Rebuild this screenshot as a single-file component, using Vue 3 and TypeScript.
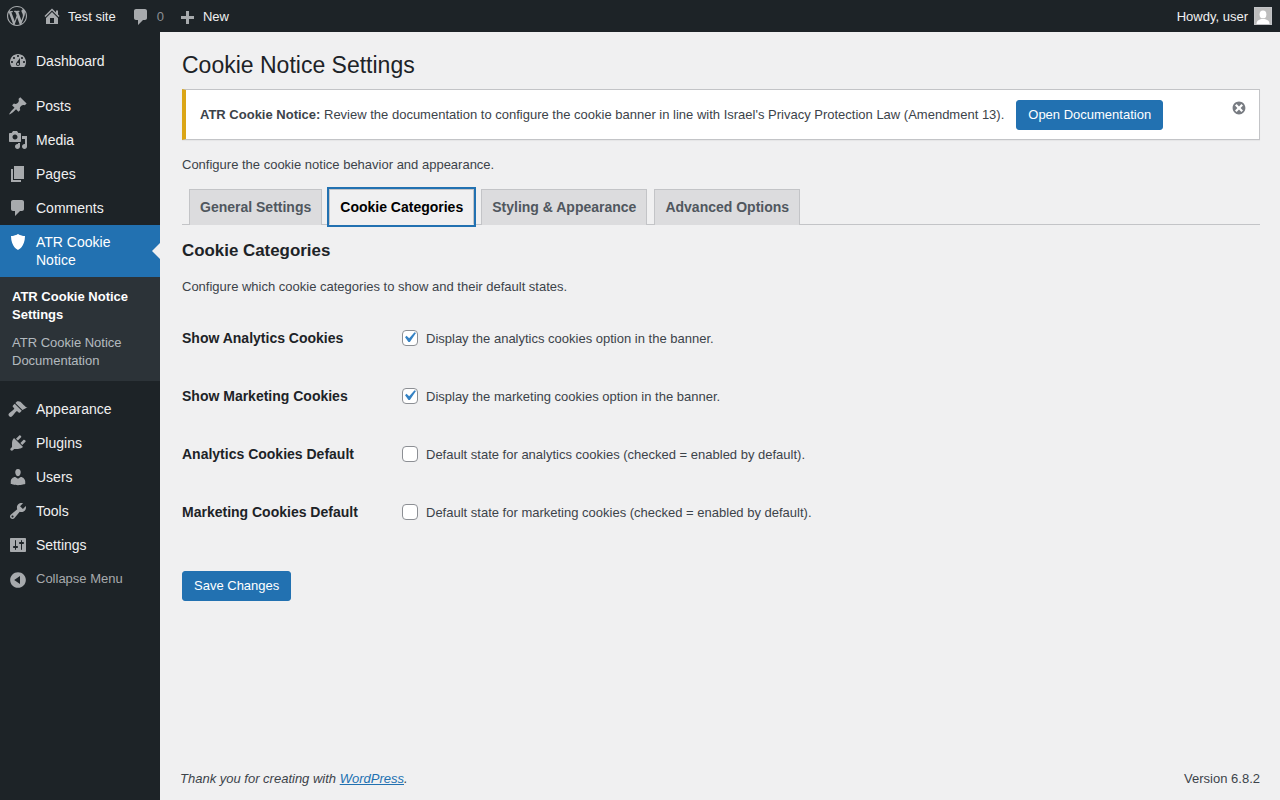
<script setup lang="ts">
import { ref } from 'vue'

interface MenuItem { label: string; d: string }

const icons = {
  dashboard: 'M3.76 16h12.48c1.1-1.37 1.76-3.11 1.76-5 0-4.42-3.58-8-8-8s-8 3.58-8 8c0 1.89.66 3.63 1.76 5zM10 4c.55 0 1 .45 1 1s-.45 1-1 1-1-.45-1-1 .45-1 1-1zM6 6c.55 0 1 .45 1 1s-.45 1-1 1-1-.45-1-1 .45-1 1-1zm8 0c.55 0 1 .45 1 1s-.45 1-1 1-1-.45-1-1 .45-1 1-1zm-5.37 5.55L12 7v6c0 1.1-.9 2-2 2s-2-.9-2-2c0-.57.24-1.08.63-1.45zM4 10c.55 0 1 .45 1 1s-.45 1-1 1-1-.45-1-1 .45-1 1-1zm12 0c.55 0 1 .45 1 1s-.45 1-1 1-1-.45-1-1 .45-1 1-1zm-5 3c0-.55-.45-1-1-1s-1 .45-1 1 .45 1 1 1 1-.45 1-1z',
  post: 'M10.44 3.02l1.82-1.82 6.36 6.35-1.83 1.82c-1.05-.68-2.48-.57-3.41.36l-.75.75c-.92.93-1.04 2.35-.35 3.41l-1.83 1.82-2.41-2.41-2.8 2.79c-.42.42-3.38 2.71-3.8 2.29s1.86-3.39 2.28-3.81l2.79-2.79L4.1 9.36l1.83-1.82c1.05.69 2.48.57 3.4-.36l.75-.75c.93-.92 1.05-2.35.36-3.41z',
  media: 'M13 11V4c0-.55-.45-1-1-1h-1.67L9 1H5L3.67 3H2c-.55 0-1 .45-1 1v7c0 .55.45 1 1 1h10c.55 0 1-.45 1-1zM7 4.5c1.38 0 2.5 1.12 2.5 2.5S8.38 9.5 7 9.5 4.5 8.38 4.5 7 5.62 4.5 7 4.5zM14 6h5v10.5c0 1.38-1.12 2.5-2.5 2.5S14 17.88 14 16.5s1.12-2.5 2.5-2.5c.17 0 .34.02.5.05V9h-3V6zm-4 8.05V13h2v3.5c0 1.38-1.12 2.5-2.5 2.5S7 17.88 7 16.5 8.12 14 9.5 14c.17 0 .34.02.5.05z',
  page: 'M6 15V2h10v13H6zm-1 1h8v2H3V5h2v11z',
  comment: 'M5 2h9c1.1 0 2 .9 2 2v7c0 1.1-.9 2-2 2h-2l-5 5v-5H5c-1.1 0-2-.9-2-2V4c0-1.1.9-2 2-2z',
  shield: 'M10 2s3 2 7 2c0 11-7 14-7 14S3 15 3 4c4 0 7-2 7-2z',
  appearance: 'M14.48 11.06L7.41 3.99l1.5-1.5c.5-.56 2.3-.47 3.51.32.47.31 3.37 3.38 4.83 4.6 1.15.96 1.68 1.14 2.75.69zm-.71.71L6.7 4.7 4.93 6.47c-.39.39-.39 1.02 0 1.41l1.06 1.06c.39.39.39 1.03 0 1.42-.6.6-5.5 4.24-5.5 5.23 0 1.2 1.21 2.41 2.41 2.41.99 0 4.63-4.9 5.23-5.5.39-.39 1.03-.39 1.42 0l1.06 1.06c.39.39 1.02.39 1.41 0z',
  plugins: 'M13.11 4.36L9.87 7.6 8 5.73l3.24-3.24c.35-.34 1.05-.2 1.56.32.52.51.66 1.21.31 1.55zm-8 1.77l.91-1.12 9.01 9.01-1.19.84c-.71.71-2.63 1.16-3.82 1.16H6.14L4.9 17.26c-.59.59-1.54.59-2.12 0-.59-.58-.59-1.53 0-2.12l1.24-1.24v-3.88c0-1.13.4-3.19 1.09-3.89zm7.26 3.97l3.24-3.24c.34-.35 1.04-.21 1.55.31.52.51.66 1.21.31 1.55l-3.24 3.25z',
  users: 'M10 9.25c-2.27 0-2.73-3.44-2.73-3.44C7 4.02 7.82 2 9.97 2c2.16 0 2.98 2.02 2.71 3.81 0 0-.41 3.44-2.68 3.44zm0 2.57L12.72 10c2.39 0 4.52 2.33 4.52 4.53v2.49s-3.65 1.13-7.24 1.13c-3.65 0-7.24-1.13-7.24-1.13v-2.49c0-2.25 1.94-4.48 4.47-4.48z',
  tools: 'M16.68 9.77c-1.34 1.34-3.3 1.67-4.95.99l-5.41 6.52c-.99.99-2.59.99-3.58 0s-.99-2.59 0-3.57l6.52-5.42c-.68-1.65-.35-3.61.99-4.95 1.28-1.28 3.12-1.62 4.72-1.06l-2.89 2.89 2.82 2.82 2.86-2.87c.53 1.58.18 3.39-1.08 4.65zM3.81 16.21c.4.39 1.04.39 1.43 0 .4-.4.4-1.04 0-1.43-.39-.4-1.03-.4-1.43 0-.39.39-.39 1.03 0 1.43z',
  settings: 'M18 16V4c0-.55-.45-1-1-1H3c-.55 0-1 .45-1 1v12c0 .55.45 1 1 1h14c.55 0 1-.45 1-1zM8 11h1c.55 0 1 .45 1 1s-.45 1-1 1H8v1.5c0 .28-.22.5-.5.5s-.5-.22-.5-.5V13H6c-.55 0-1-.45-1-1s.45-1 1-1h1V5.5c0-.28.22-.5.5-.5s.5.22.5.5V11zm5-2h-1c-.55 0-1-.45-1-1s.45-1 1-1h1V5.5c0-.28.22-.5.5-.5s.5.22.5.5V7h1c.55 0 1 .45 1 1s-.45 1-1 1h-1v5.5c0 .28-.22.5-.5.5s-.5-.22-.5-.5V9z',
  collapse: 'M10 2.16c4.33 0 7.84 3.51 7.84 7.84s-3.51 7.84-7.84 7.84S2.16 14.33 2.16 10 5.71 2.16 10 2.16zm2 11.72V6.12L6.18 9.97z',
  home: 'M16 8.5l1.53 1.53-1.06 1.06L10 4.62l-6.47 6.47-1.06-1.06L10 2.5l4 4v-2h2v4zm-6-2.46l6 5.99V18H4v-5.97zM12 17v-5H8v5h4z',
  plus: 'M17 7v3h-5v5H9v-5H4V7h5V2h3v5h5z',
  wp: 'M20 10c0-5.51-4.49-10-10-10C4.48 0 0 4.49 0 10c0 5.52 4.48 10 10 10 5.51 0 10-4.48 10-10zM7.78 15.37L4.37 6.22c.55-.02 1.17-.08 1.17-.08.5-.06.44-1.13-.06-1.11 0 0-1.45.11-2.37.11-.18 0-.37 0-.58-.01C4.12 2.69 6.87 1.11 10 1.11c2.33 0 4.45.87 6.05 2.34-.68-.11-1.65.39-1.65 1.58 0 .74.45 1.36.9 2.1.35.61.55 1.36.55 2.46 0 1.49-1.4 5-1.4 5l-3.03-8.37c.54-.02.82-.17.82-.17.5-.05.44-1.25-.06-1.22 0 0-1.44.12-2.38.12-.87 0-2.33-.12-2.33-.12-.5-.03-.56 1.2-.06 1.22l.92.08 1.26 3.41zM17.41 10c.24-.64.74-1.87.43-4.25.7 1.29 1.05 2.71 1.05 4.25 0 3.29-1.73 6.24-4.4 7.78.97-2.59 1.94-5.2 2.92-7.78zM6.1 18.09C3.12 16.65 1.11 13.53 1.11 10c0-1.3.23-2.48.72-3.59C3.25 10.3 4.67 14.2 6.1 18.09zm4.03-6.63l2.58 6.98c-.86.29-1.76.45-2.71.45-.79 0-1.57-.11-2.29-.33.81-2.38 1.62-4.74 2.42-7.1z',
  dismiss: 'M10 2c4.42 0 8 3.58 8 8s-3.58 8-8 8-8-3.58-8-8 3.58-8 8-8zm5 11l-3-3 3-3-2-2-3 3-3-3-2 2 3 3-3 3 2 2 3-3 3 3z'
}

const menuTop: MenuItem[] = [
  { label: 'Posts', d: icons.post },
  { label: 'Media', d: icons.media },
  { label: 'Pages', d: icons.page },
  { label: 'Comments', d: icons.comment }
]
const menuBottom: MenuItem[] = [
  { label: 'Appearance', d: icons.appearance },
  { label: 'Plugins', d: icons.plugins },
  { label: 'Users', d: icons.users },
  { label: 'Tools', d: icons.tools },
  { label: 'Settings', d: icons.settings }
]
const tabs = ['General Settings', 'Cookie Categories', 'Styling & Appearance', 'Advanced Options']
const activeTab = ref('Cookie Categories')

const rows = ref([
  { label: 'Show Analytics Cookies', text: 'Display the analytics cookies option in the banner.', on: true },
  { label: 'Show Marketing Cookies', text: 'Display the marketing cookies option in the banner.', on: true },
  { label: 'Analytics Cookies Default', text: 'Default state for analytics cookies (checked = enabled by default).', on: false },
  { label: 'Marketing Cookies Default', text: 'Default state for marketing cookies (checked = enabled by default).', on: false }
])
</script>

<template>
  <div class="page">
    <header class="bar">
      <div class="bar-left">
        <svg class="bar-wp" viewBox="0 0 20 20"><path :d="icons.wp" /></svg>
        <svg class="bar-home" viewBox="0 0 20 20"><path :d="icons.home" /></svg>
        <span class="bar-site">Test site</span>
        <svg class="bar-comment" viewBox="0 0 20 20"><path :d="icons.comment" /></svg>
        <span class="bar-count">0</span>
        <svg class="bar-plus" viewBox="0 0 20 20"><path :d="icons.plus" /></svg>
        <span class="bar-new">New</span>
      </div>
      <div class="bar-right">
        <span>Howdy, user</span>
        <svg class="avatar" viewBox="0 0 18 18">
          <rect width="18" height="18" fill="#c3c4c7" />
          <rect x="1" y="1" width="16" height="16" fill="#bdbdbd" />
          <ellipse cx="9" cy="7.4" rx="3.4" ry="3.9" fill="#fff" />
          <path d="M2.5 17c0-3.6 3-5 6.5-5s6.500 1.400 6.500 5z" fill="#fff" />
        </svg>
      </div>
    </header>

    <div class="body">
      <aside class="side">
        <a class="item">
          <svg class="ico" viewBox="0 0 20 20"><path :d="icons.dashboard" /></svg>
          <span>Dashboard</span>
        </a>
        <div class="gap-one"></div>
        <a v-for="m in menuTop" :key="m.label" class="item">
          <svg class="ico" viewBox="0 0 20 20"><path :d="m.d" /></svg>
          <span>{{ m.label }}</span>
        </a>
        <a class="item current">
          <svg class="ico" viewBox="0 0 20 20"><path :d="icons.shield" /></svg>
          <span>ATR Cookie Notice</span>
          <i class="arrow"></i>
        </a>
        <div class="sub">
          <a class="sub-item strong">ATR Cookie Notice Settings</a>
          <a class="sub-item">ATR Cookie Notice Documentation</a>
        </div>
        <div class="gap-two"></div>
        <a v-for="m in menuBottom" :key="m.label" class="item">
          <svg class="ico" viewBox="0 0 20 20"><path :d="m.d" /></svg>
          <span>{{ m.label }}</span>
        </a>
        <a class="item collapse">
          <svg class="ico" viewBox="0 0 20 20"><path :d="icons.collapse" /></svg>
          <span>Collapse Menu</span>
        </a>
      </aside>

      <div class="content">
        <main class="wrap">
          <h1>Cookie Notice Settings</h1>
          <div class="notice">
            <p><strong>ATR Cookie Notice:</strong> Review the documentation to configure the cookie banner in line with Israel's Privacy Protection Law (Amendment 13).</p>
            <a class="btn">Open Documentation</a>
            <svg class="dismiss" viewBox="0 0 20 20"><path :d="icons.dismiss" /></svg>
          </div>
          <p class="intro">Configure the cookie notice behavior and appearance.</p>
          <nav class="tabs">
            <a v-for="t in tabs" :key="t" class="tab" :class="{ active: t === activeTab }" @click="activeTab = t">{{ t }}</a>
          </nav>
          <h2>Cookie Categories</h2>
          <p class="desc">Configure which cookie categories to show and their default states.</p>
          <div class="form">
            <div v-for="r in rows" :key="r.label" class="row">
              <div class="row-label">{{ r.label }}</div>
              <label class="row-field">
                <span class="check">
                  <input v-model="r.on" type="checkbox" />
                  <svg v-if="r.on" class="tick" viewBox="0 0 20 20"><path d="M14.83 4.89l1.34.94-5.81 8.38H9.02L5.78 9.67l1.34-1.25 2.57 2.4z" /></svg>
                </span>
                <span>{{ r.text }}</span>
              </label>
            </div>
          </div>
          <a class="btn save">Save Changes</a>
        </main>
        <footer class="foot">
          <span class="thanks">Thank you for creating with <a>WordPress</a>.</span>
          <span class="ver">Version 6.8.2</span>
        </footer>
      </div>
    </div>
  </div>
</template>

<style>
html, body { margin: 0; height: 100%; overflow: hidden; background: #f0f0f1; }
</style>

<style scoped>
.page {
  display: flex;
  flex-direction: column;
  height: 800px;
  font-family: "Liberation Sans", Arial, sans-serif;
  font-size: 13px;
  color: #3c434a;
}
.bar {
  flex: none;
  height: 32px;
  background: #1d2327;
  color: #f0f0f1;
  display: flex;
  align-items: center;
  justify-content: space-between;
  padding: 0 8px 0 7px;
}
.bar svg { fill: #a7aaad; flex: none; display: block; }
.bar-left, .bar-right { display: flex; align-items: center; }
.bar-wp { width: 20px; height: 20px; }
.bar-home { width: 20px; height: 20px; margin: 0 0 0 15px; }
.bar-site { margin-left: 6px; }
.bar-comment { width: 20px; height: 20px; margin-left: 15px; position: relative; top: 1px; }
.bar-count { margin-left: 6px; color: #8c8f94; }
.bar-plus { width: 20px; height: 20px; margin-left: 13px; position: relative; top: 3px; }
.bar-new { margin-left: 6px; }
.bar-right { gap: 6px; }
.avatar { width: 18px; height: 18px; }
.body { flex: 1; display: flex; min-height: 0; }
.side {
  flex: none;
  width: 160px;
  background: #1d2327;
  padding-top: 12px;
  color: #f0f0f1;
  font-size: 14px;
  line-height: 18px;
}
.item {
  position: relative;
  display: flex;
  padding: 8px 8px 8px 36px;
  min-height: 18px;
}
.ico {
  position: absolute;
  left: 8px;
  top: 7px;
  width: 20px;
  height: 20px;
  fill: #a7aaad;
}
.gap-one { height: 11px; }
.gap-two { height: 11px; }
.current { background: #2271b1; color: #fff; }
.current .ico { fill: #fff; }
.arrow {
  position: absolute;
  right: 0;
  top: 50%;
  margin-top: -8px;
  border: 8px solid transparent;
  border-right-color: #f0f0f1;
  border-left-width: 0;
}
.sub {
  background: #2c3338;
  padding: 6px 0;
  font-size: 13px;
  color: rgba(240, 246, 252, 0.7);
}
.sub-item { display: block; padding: 5px 12px; }
.strong { font-weight: 600; color: #fff; }
.collapse { color: #a7aaad; font-size: 13px; }
.collapse .ico { top: 7.500px; }
.content { flex: 1; min-width: 0; display: flex; flex-direction: column; padding-left: 20px; }
.wrap { flex: 1; margin: 10px 20px 0 2px; }
h1 {
  margin: 0;
  padding: 9px 0 4px;
  font-size: 23px;
  font-weight: 400;
  line-height: 1.3;
  color: #1d2327;
}
.notice {
  position: relative;
  display: flex;
  align-items: center;
  gap: 12px;
  margin-top: 4px;
  padding: 10px 38px 9px 14px;
  height: 30px;
  background: #fff;
  border: 1px solid #c3c4c7;
  border-left: 4px solid #dba617;
  box-shadow: 0 1px 1px rgba(0, 0, 0, 0.04);
}
.notice p { margin: 0; line-height: 1.5; }
.btn {
  flex: none;
  display: inline-block;
  box-sizing: border-box;
  height: 30px;
  padding: 0 11px;
  line-height: 28px;
  border: 1px solid #2271b1;
  border-radius: 3px;
  background: #2271b1;
  color: #fff;
  cursor: pointer;
}
.dismiss {
  position: absolute;
  right: 12px;
  top: 10px;
  width: 16px;
  height: 16px;
  fill: #787c82;
}
.intro { margin: 15px 0 0; line-height: 1.5; }
.tabs {
  display: flex;
  margin-top: 15px;
  padding-left: 7px;
  gap: 7px;
  border-bottom: 1px solid #c3c4c7;
  height: 35px;
}
.tab {
  display: block;
  height: 34px;
  padding: 5px 10px;
  box-sizing: border-box;
  height: 36px;
  border: 1px solid #c3c4c7;
  border-bottom: none;
  background: #dcdcde;
  color: #50575e;
  font-size: 14px;
  font-weight: 600;
  line-height: 24px;
  cursor: pointer;
}
.tab.active {
  background: #f0f0f1;
  color: #000;
  box-shadow: 0 0 0 2px #2271b1;
  border-bottom: 1px solid #f0f0f1;
  position: relative;
}
h2 {
  margin: 16px 0 0;
  font-size: 16.9px;
  line-height: 20px;
  font-weight: 600;
  color: #1d2327;
}
.desc { margin: 16px 0 0; line-height: 20px; }
.form { margin-top: 12px; }
.row { display: flex; align-items: center; height: 58px; }
.row-label {
  flex: none;
  width: 220px;
  font-size: 14px;
  font-weight: 600;
  color: #1d2327;
}
.row-field { display: flex; align-items: center; gap: 8px; }
.check { position: relative; display: block; width: 16px; height: 16px; }
.check input {
  appearance: none;
  display: block;
  box-sizing: border-box;
  width: 16px;
  height: 16px;
  margin: 0;
  background: #fff;
  border: 1px solid #8c8f94;
  border-radius: 4px;
  cursor: pointer;
}
.tick {
  position: absolute;
  left: -3px;
  top: -3px;
  width: 21px;
  height: 21px;
  fill: #3582c4;
  pointer-events: none;
}
.save { margin-top: 30px; }
.foot {
  display: flex;
  justify-content: space-between;
  padding: 0 20px 11px 0;
  line-height: 20px;
}
.thanks { font-style: italic; }
.thanks a { color: #2271b1; text-decoration: underline; }
</style>
